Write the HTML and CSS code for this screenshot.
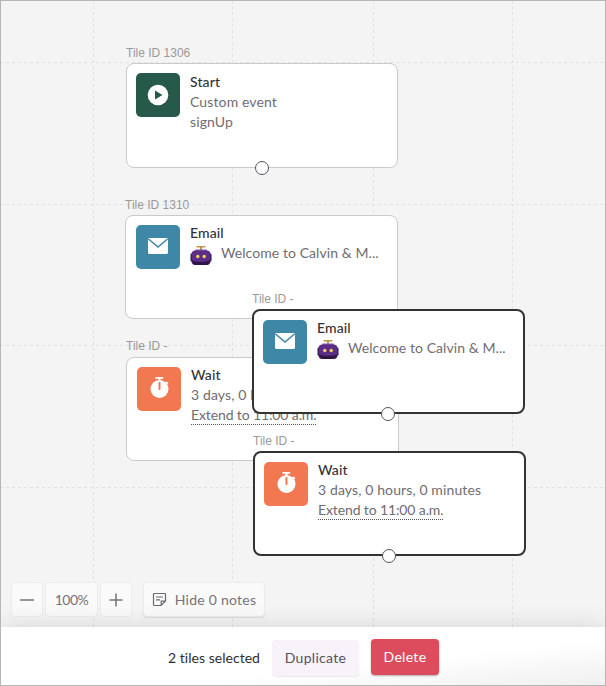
FILE: index.html
```html
<!DOCTYPE html>
<html>
<head>
	<title>Canvas</title>
	<meta name="viewport" content="width=device-width, initial-scale=1">
	<link rel="stylesheet" href="styles.css">
</head>
<body>
	<svg width="0" height="0" class="defs">
		<defs>
			<symbol id="mail" viewBox="0 0 44 44">
				<path d="M12 14.500c0-.8.7-1.500 1.500-1.500h17c.8 0 1.500.7 1.500 1.500v13c0 .8-.7 1.500-1.500 1.500h-17c-.8 0-1.500-.7-1.500-1.500z" fill="#fff"/>
				<path d="M12.500 14l9.500 8 9.500-8" fill="none" stroke="#3f87a6" stroke-width="1.600"/>
			</symbol>
			<symbol id="watch" viewBox="0 0 44 44">
				<rect x="18.300" y="10" width="8" height="1.700" rx=".6" fill="#fff"/>
				<rect x="21.500" y="11" width="2" height="3" fill="#fff"/>
				<path d="M29.500 14.300l2 1.900-1.200 1.200-2-1.900z" fill="#fff"/>
				<circle cx="22.500" cy="22" r="9" fill="#fff"/>
				<rect x="21.500" y="15" width="2" height="8" rx="1" fill="#f27852"/>
			</symbol>
			<symbol id="robot" viewBox="0 0 22 22">
				<rect x="6.500" y="1" width="9" height="1.500" rx=".5" fill="#c0954a"/>
				<rect x="10.200" y="2" width="1.600" height="3" fill="#a67f3e"/>
				<rect x="5" y="4.500" width="12" height="2" rx="1" fill="#7d5aa0"/>
				<rect x="0.500" y="8.500" width="3" height="8" rx="1.200" fill="#2b1740"/>
				<rect x="18.500" y="8.500" width="3" height="8" rx="1.200" fill="#2b1740"/>
				<rect x="1.500" y="5.500" width="19" height="14.500" rx="4" fill="#5b2d86"/>
				<path d="M1.700 15c3 2.500 15.600 2.500 18.600 0 0 3-2 5-4.800 5h-9c-2.800 0-4.800-2-4.800-5z" fill="#2f1547"/>
				<circle cx="7.800" cy="11.500" r="1.700" fill="#f4cf62"/>
				<circle cx="14.200" cy="11.500" r="1.700" fill="#f4cf62"/>
			</symbol>
		</defs>
	</svg>

	<div class="frame">
		<div class="canvas">
			<svg class="grid" width="606" height="630">
				<g class="gridLines">
					<line x1="93.500" y1="0" x2="93.500" y2="630"/>
					<line x1="232.500" y1="0" x2="232.500" y2="630"/>
					<line x1="373.500" y1="0" x2="373.500" y2="630"/>
					<line x1="512.500" y1="0" x2="512.500" y2="630"/>
					<line x1="0" y1="62.500" x2="606" y2="62.500"/>
					<line x1="0" y1="204.500" x2="606" y2="204.500"/>
					<line x1="0" y1="345.500" x2="606" y2="345.500"/>
					<line x1="0" y1="487.500" x2="606" y2="487.500"/>
				</g>
			</svg>

			<div class="node nodeStart">
				<div class="tileId">Tile ID 1306</div>
				<div class="tile">
					<div class="tileIcon iconGreen">
						<svg width="22" height="22" viewBox="0 0 22 22"><circle cx="11" cy="11" r="10.300" fill="#fff"/><path d="M8 6.500l7.500 4.500L8 15.500z" fill="#27594b"/></svg>
					</div>
					<div class="tileBody">
						<div class="tileTitle">Start</div>
						<div class="tileLine">Custom event</div>
						<div class="tileLine">signUp</div>
					</div>
					<span class="port"></span>
				</div>
			</div>

			<div class="node nodeEmail">
				<div class="tileId">Tile ID 1310</div>
				<div class="tile">
					<div class="tileIcon iconBlue"><svg width="44" height="44"><use href="#mail"/></svg></div>
					<div class="tileBody">
						<div class="tileTitle">Email</div>
						<div class="tileLine subject"><svg class="robot" width="22" height="22"><use href="#robot"/></svg>Welcome to Calvin &amp; M...</div>
					</div>
					<span class="port"></span>
				</div>
			</div>

			<div class="node nodeWait">
				<div class="tileId">Tile ID -</div>
				<div class="tile">
					<div class="tileIcon iconOrange"><svg width="44" height="44"><use href="#watch"/></svg></div>
					<div class="tileBody">
						<div class="tileTitle">Wait</div>
						<div class="tileLine">3 days, 0 hours, 0 minutes</div>
						<div class="tileLine"><span class="extend">Extend to 11:00 a.m.</span></div>
					</div>
					<span class="port"></span>
				</div>
			</div>

			<div class="node nodeEmailCopy">
				<div class="tileId">Tile ID -</div>
				<div class="tile selected">
					<div class="tileIcon iconBlue"><svg width="44" height="44"><use href="#mail"/></svg></div>
					<div class="tileBody">
						<div class="tileTitle">Email</div>
						<div class="tileLine subject"><svg class="robot" width="22" height="22"><use href="#robot"/></svg>Welcome to Calvin &amp; M...</div>
					</div>
					<span class="port"></span>
				</div>
			</div>

			<div class="node nodeWaitCopy">
				<div class="tileId">Tile ID -</div>
				<div class="tile selected">
					<div class="tileIcon iconOrange"><svg width="44" height="44"><use href="#watch"/></svg></div>
					<div class="tileBody">
						<div class="tileTitle">Wait</div>
						<div class="tileLine">3 days, 0 hours, 0 minutes</div>
						<div class="tileLine"><span class="extend">Extend to 11:00 a.m.</span></div>
					</div>
					<span class="port"></span>
				</div>
			</div>

			<div class="tools">
				<button class="tool toolZoom">
					<svg width="16" height="16" viewBox="0 0 16 16"><path d="M1 8h14" stroke="#77737a" stroke-width="1.500"/></svg>
				</button>
				<div class="tool toolPercent">100%</div>
				<button class="tool toolZoom">
					<svg width="16" height="16" viewBox="0 0 16 16"><path d="M1.500 8h13M8 1.500v13" stroke="#77737a" stroke-width="1.500"/></svg>
				</button>
				<button class="tool toolNotes">
					<svg width="15" height="15" viewBox="0 0 15 15" fill="none" stroke="#6d696f" stroke-width="1.200"><path d="M13.500 9V2.500a1 1 0 0 0-1-1h-10a1 1 0 0 0-1 1v10a1 1 0 0 0 1 1H9z"/><path d="M13.500 9.200H9.200v4.200M4 5h7M4 7.800h4"/></svg>
					Hide 0 notes
				</button>
			</div>
		</div>

		<div class="footer">
			<span class="selectedCount">2 tiles selected</span>
			<button class="button buttonLight">Duplicate</button>
			<button class="button buttonRed">Delete</button>
		</div>
	</div>
</body>
</html>
```

FILE: styles.css
```css
html, body { margin: 0; padding: 0; }
body { font-family: Lato, "Open Sans", sans-serif; }
.defs { position: absolute; }

.frame { width: 606px; height: 686px; box-sizing: border-box; border: 1px solid #b6b6b6; display: flex; flex-direction: column; overflow: hidden; }

.canvas { flex: 1; position: relative; margin: -1px -1px 0; background: #f4f4f4; }
.grid { position: absolute; left: 0; top: 0; }
.gridLines line { stroke: #e2e2e2; stroke-width: 1; stroke-dasharray: 3 3; }

.node { position: absolute; width: 273px; }
.nodeStart { left: 126px; top: 45px; width: 272px; }
.nodeEmail { left: 125px; top: 197px; }
.nodeWait { left: 126px; top: 339px; }
.nodeEmailCopy { left: 252px; top: 291px; }
.nodeWaitCopy { left: 253px; top: 433px; }

.tileId { font-family: "Liberation Sans", Arial, sans-serif; font-size: 12px; line-height: 14px; height: 17px; padding-top: 1px; color: #9a9a9a; }
.nodeWait .tileId { margin-top: -1px; height: 18px; }

.tile { position: relative; box-sizing: border-box; height: 105px; padding: 9px; background: #fff; border: 1px solid #cbcaca; border-radius: 8px; display: flex; gap: 10px; }
.nodeEmail .tile, .nodeWait .tile { padding-left: 10px; height: 104px; }
.tile.selected { border: 2px solid #333; }

.tileIcon { width: 44px; height: 44px; border-radius: 5px; flex: none; display: flex; align-items: center; justify-content: center; }
.iconGreen { background: #27594b; }
.iconBlue { background: #3f87a6; }
.iconOrange { background: #f27852; }

.tileBody { min-width: 0; flex: 1; margin-top: -1px; }
.selected .tileBody, .nodeEmail .tileBody, .nodeWait .tileBody { margin-top: -2px; }
.tileTitle { font-size: 14px; font-weight: 500; line-height: 20px; color: #333136; white-space: nowrap; letter-spacing: .1px; }
.tileLine { font-size: 14px; line-height: 20px; color: #6f6c72; white-space: nowrap; letter-spacing: .12px; }
.subject { display: flex; align-items: flex-start; gap: 9px; letter-spacing: .07px; }
.robot { flex: none; margin-top: 1px; }
.nodeEmail .robot { margin-top: 2px; }
.extend { display: inline-block; line-height: 18px; border-bottom: 1px dotted #55535a; letter-spacing: -.12px; }
.nodeWait .extend { line-height: 19px; }

.port { position: absolute; left: 50%; bottom: -8px; margin-left: -8px; width: 12px; height: 12px; background: #fff; border: 1px solid #55535a; border-radius: 50%; }
.nodeStart .port { margin-left: -7px; }
.selected .port { bottom: -9px; }

.tools { position: absolute; left: 11px; top: 582px; display: flex; gap: 2px; z-index: 3; }
.tool { box-sizing: border-box; height: 35px; background: #fafafa; border: 1px solid #ececec; border-radius: 4px; font-family: inherit; font-size: 14px; color: #77737a; display: flex; align-items: center; justify-content: center; padding: 0; }
.toolZoom { width: 32px; }
.toolPercent { width: 53px; letter-spacing: -.5px; }
.toolNotes { width: 122px; margin-left: 9px; gap: 8px; letter-spacing: .25px; box-shadow: 0 1px 1px rgba(0, 0, 0, .1); }

.footer { position: relative; z-index: 4; margin: 0 -1px -1px; height: 59px; box-sizing: border-box; padding: 2px 0 0 168px; background: linear-gradient(174deg, #fff 62%, #efefef 100%); box-shadow: 0 0 26px rgba(0, 0, 0, .13); display: flex; align-items: center; }
.selectedCount { font-size: 14px; color: #2f2d31; letter-spacing: .03px; margin-right: 12px; white-space: nowrap; }
.button { box-sizing: border-box; height: 36px; border: none; border-radius: 4px; font-family: inherit; font-size: 14px; letter-spacing: .3px; padding: 0; }
.buttonLight { width: 87px; margin-right: 12px; background: #f8f2fb; color: #55525a; box-shadow: 0 1px 1px rgba(0, 0, 0, .08); }
.buttonRed { width: 68px; margin-top: -2px; background: #dc4c5c; color: #fff; box-shadow: 0 1px 2px rgba(0, 0, 0, .3); }
```
